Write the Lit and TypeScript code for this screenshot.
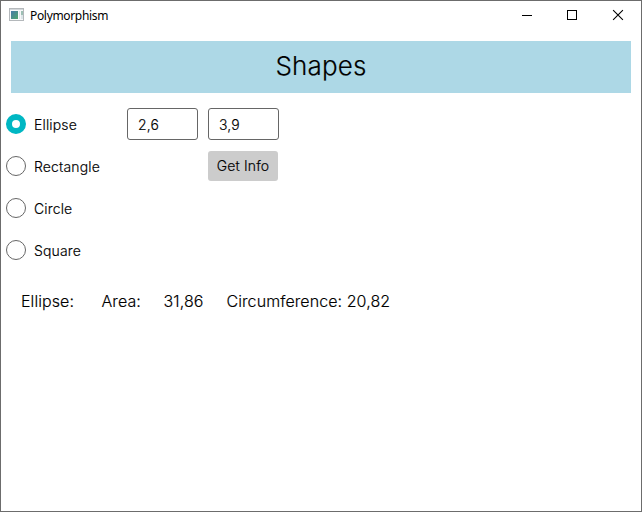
import { LitElement, html, css } from "lit";
import { customElement, state } from "lit/decorators.js";
import { classMap } from "lit/directives/class-map.js";

@customElement("title-bar")
class TitleBar extends LitElement {
  static styles = css`
    :host { display: flex; height: 30px; align-items: center; color: #000; -webkit-text-stroke: 0; }
    .icon { margin-left: 8px; margin-bottom: 2px; width: 16px; height: 14px; display: block; }
    .title { margin-left: 5px; flex: 1; font: 12px/16px "Noto Sans", sans-serif; letter-spacing: -0.33px; white-space: nowrap; }
    .buttons { display: flex; height: 30px; }
    .buttons svg { display: block; width: 45px; height: 30px; }
  `;
  render() {
    return html`
      <svg class="icon" viewBox="0 0 16 14">
        <defs>
          <linearGradient id="g" x1="0" y1="0" x2="1" y2="1">
            <stop offset="0" stop-color="#4679a8" />
            <stop offset="1" stop-color="#4da66c" />
          </linearGradient>
        </defs>
        <rect x="0.5" y="0.5" width="14" height="12" fill="#f7f8f9" stroke="#b4b8bb" />
        <rect x="1" y="1" width="13" height="1" fill="#d3d7da" />
        <rect x="2" y="3" width="7" height="8" fill="url(#g)" />
        <rect x="10" y="3" width="1" height="8" fill="#dfe5e9" />
        <rect x="12" y="3" width="2" height="4" fill="#9dbfb4" />
        <rect x="12" y="7" width="2" height="4" fill="#dce5e8" />
      </svg>
      <div class="title">Polymorphism</div>
      <div class="buttons">
        <svg viewBox="0 0 45 30"><path d="M16 14.5h10" stroke="#000" shape-rendering="crispEdges" /></svg>
        <svg viewBox="0 0 45 30"><rect x="16.5" y="9.5" width="9" height="9" fill="none" stroke="#000" /></svg>
        <svg viewBox="0 0 45 30"><path d="M17.1 9.1l9.8 9.8M26.9 9.1l-9.8 9.8" stroke="#000" stroke-width="1.1" /></svg>
      </div>
    `;
  }
}

@customElement("shape-option")
class ShapeOption extends LitElement {
  static properties = { label: {}, checked: { type: Boolean } };
  declare label: string;
  declare checked: boolean;
  static styles = css`
    :host { display: flex; height: 42px; align-items: center; gap: 8px; cursor: default; }
    .dot { box-sizing: border-box; width: 20px; height: 20px; border: 1px solid #666; border-radius: 50%; }
    .dot.on { border: 6px solid #00b7c3; }
    .label { line-height: 20px; padding-top: 1px; }
  `;
  render() {
    return html`<div class=${classMap({ dot: true, on: this.checked })}></div><div class="label">${this.label}</div>`;
  }
}

@customElement("app-root")
class AppRoot extends LitElement {
  @state() private selected = "Ellipse";

  static styles = css`
    :host {
      display: block; box-sizing: border-box; width: 642px; height: 512px;
      border: 1px solid #6c6c6c; background: #fff; color: #000; overflow: hidden;
      font: 300 14px/20px Inter, "Liberation Sans", sans-serif; letter-spacing: 0.15px;
      -webkit-text-stroke: 0.15px #000;
    }
    .banner { margin: 10px 10px 0; height: 52px; background: #add8e6; text-align: center; font-size: 26px; line-height: 50px; }
    .form { display: flex; margin: 10px 0 0 5px; }
    .options { width: 121px; }
    .inputs { display: grid; grid-template-columns: 71px 71px; gap: 11px 10px; align-content: start; padding-top: 5px; }
    .field { box-sizing: border-box; height: 32px; border: 1px solid #666; border-radius: 3px; padding: 1px 0 0 10px; line-height: 30px; }
    .action { grid-column: 2; width: 70px; height: 30px; border-radius: 3px; background: #ccc; text-align: center; line-height: 30px; }
    .result { display: flex; margin: 19px 0 0 20px; font-size: 16px; line-height: 22px; letter-spacing: 0.08px; white-space: pre; }
    .name { width: 80.5px; }
    .area { width: 62px; }
    .value { width: 63px; }
  `;

  render() {
    return html`
      <title-bar></title-bar>
      <div class="banner">Shapes</div>
      <div class="form">
        <div class="options">
          ${["Ellipse", "Rectangle", "Circle", "Square"].map(
            (s) => html`<shape-option .label=${s} .checked=${s === this.selected} @click=${() => (this.selected = s)}></shape-option>`
          )}
        </div>
        <div class="inputs">
          <div class="field">2,6</div>
          <div class="field">3,9</div>
          <div class="action">Get Info</div>
        </div>
      </div>
      <div class="result">
        <div class="name">Ellipse:</div>
        <div class="area">Area:</div>
        <div class="value">31,86</div>
        <div>Circumference: 20,82</div>
      </div>
    `;
  }
}
